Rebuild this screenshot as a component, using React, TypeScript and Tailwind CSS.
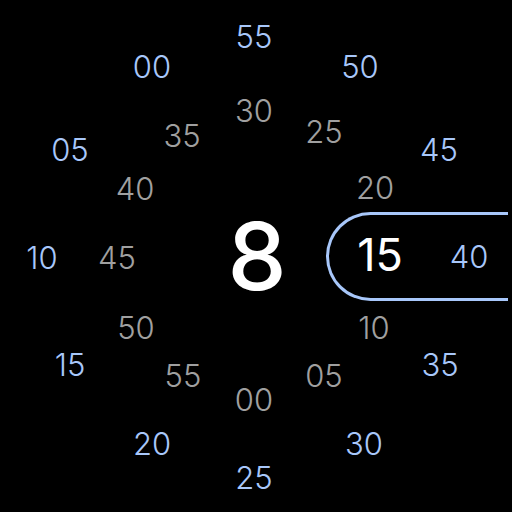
import React from "react";

type Label = { t: string; x: number; y: number };

// outer ring (seconds) — blue
const OUTER: Label[] = [
  { t: "55", x: 254, y: 36 },
  { t: "50", x: 360, y: 66 },
  { t: "45", x: 439, y: 149 },
  { t: "35", x: 440, y: 364 },
  { t: "30", x: 364, y: 443 },
  { t: "25", x: 254, y: 477 },
  { t: "20", x: 152, y: 443 },
  { t: "15", x: 70, y: 364 },
  { t: "10", x: 42, y: 257 },
  { t: "05", x: 70, y: 149 },
  { t: "00", x: 152, y: 66 },
];

// inner ring (minutes) — gray
const INNER: Label[] = [
  { t: "30", x: 254, y: 110 },
  { t: "25", x: 324, y: 131 },
  { t: "20", x: 375, y: 187 },
  { t: "10", x: 374, y: 327 },
  { t: "05", x: 324, y: 375 },
  { t: "00", x: 254, y: 399 },
  { t: "55", x: 183, y: 375 },
  { t: "50", x: 136, y: 327 },
  { t: "45", x: 117, y: 257 },
  { t: "40", x: 135, y: 188 },
  { t: "35", x: 182, y: 135 },
];

function Num({ l, className }: { l: Label; className: string }) {
  return (
    <span
      className={`absolute -translate-x-1/2 -translate-y-1/2 leading-none whitespace-nowrap ${className}`}
      style={{ left: l.x, top: l.y }}
    >
      {l.t}
    </span>
  );
}

export default function App() {
  return (
    <div
      className="relative h-[512px] w-[512px] overflow-hidden bg-black"
      style={{ fontFamily: "Inter, 'Noto Sans', sans-serif" }}
    >
      {/* selection pill */}
      <div className="absolute left-[326px] top-[212px] h-[89px] w-[182px] rounded-l-full border-[3.5px] border-r-0 border-[#a8c7fa]" />

      {OUTER.map((l) => (
        <Num key={"o" + l.t} l={l} className="text-[31px] font-light text-[#a8c7fa]" />
      ))}
      {INNER.map((l) => (
        <Num key={"i" + l.t} l={l} className="text-[31px] font-light text-[#a0a0a0]" />
      ))}

      <Num l={{ t: "40", x: 469, y: 256 }} className="text-[31px] font-light text-[#a8c7fa]" />
      <Num l={{ t: "15", x: 380, y: 254 }} className="text-[45px] text-white" />
      <Num l={{ t: "8", x: 257, y: 256 }} className="text-[94px] font-medium text-white" />
    </div>
  );
}
